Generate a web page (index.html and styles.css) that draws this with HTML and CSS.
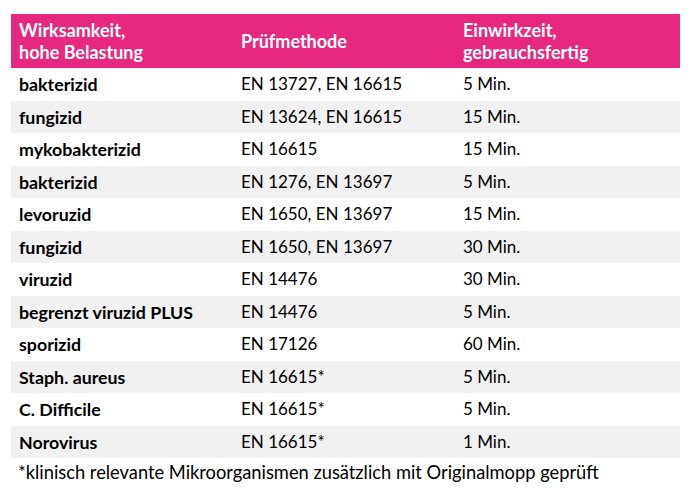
FILE: index.html
```html
<!DOCTYPE html>
<html lang="de">
<head>
<meta charset="utf-8">
<title>Wirksamkeit</title>
<link rel="stylesheet" href="styles.css">
</head>
<body>
<div class="wrap">
  <table class="tbl">
    <colgroup><col class="c1"><col class="c2"><col class="c3"></colgroup>
    <thead>
      <tr><th>Wirksamkeit,<br>hohe Belastung</th><th>Prüfmethode</th><th>Einwirkzeit,<br>gebrauchsfertig</th></tr>
    </thead>
    <tbody>
      <tr><td>bakterizid</td><td>EN 13727, EN 16615</td><td>5 Min.</td></tr>
      <tr><td>fungizid</td><td>EN 13624, EN 16615</td><td>15 Min.</td></tr>
      <tr><td>mykobakterizid</td><td>EN 16615</td><td>15 Min.</td></tr>
      <tr><td>bakterizid</td><td>EN 1276, EN 13697</td><td>5 Min.</td></tr>
      <tr><td>levoruzid</td><td>EN 1650, EN 13697</td><td>15 Min.</td></tr>
      <tr><td>fungizid</td><td>EN 1650, EN 13697</td><td>30 Min.</td></tr>
      <tr><td>viruzid</td><td>EN 14476</td><td>30 Min.</td></tr>
      <tr><td>begrenzt viruzid PLUS</td><td>EN 14476</td><td>5 Min.</td></tr>
      <tr><td>sporizid</td><td>EN 17126</td><td>60 Min.</td></tr>
      <tr><td>Staph. aureus</td><td>EN 16615*</td><td>5 Min.</td></tr>
      <tr><td>C. Difficile</td><td>EN 16615*</td><td>5 Min.</td></tr>
      <tr><td>Norovirus</td><td>EN 16615*</td><td>1 Min.</td></tr>
    </tbody>
  </table>
  <p class="note">*klinisch relevante Mikroorganismen zusätzlich mit Originalmopp geprüft</p>
</div>
</body>
</html>
```
FILE: styles.css
```css
html, body {
  margin: 0;
  padding: 0;
  background: #ffffff;
}
body {
  font-family: Lato, "Open Sans", "Liberation Sans", sans-serif;
  color: #000000;
}
.wrap {
  padding: 14px 20px 0 11px;
}
.tbl {
  width: 669px;
  border-collapse: collapse;
  table-layout: fixed;
  font-size: 17px;
}
.c1 { width: 222px; }
.c2 { width: 222px; }
.c3 { width: 225px; }
.tbl th {
  background: #e6287f;
  color: #ffffff;
  font-weight: 700;
  font-size: 18px;
  text-align: left;
  height: 54px;
  padding: 0 8px;
  line-height: 22px;
  vertical-align: middle;
}
.tbl td {
  height: 32.5px;
  padding: 0 8px;
  vertical-align: middle;
  line-height: 20px;
}
.tbl td:first-child {
  font-weight: 700;
  font-size: 17.8px;
}
.tbl tbody tr:nth-child(even) td {
  background: #f1f1f1;
}
.note {
  margin: 2px 0 0 7px;
  font-size: 18.3px;
  line-height: 24px;
}
```
